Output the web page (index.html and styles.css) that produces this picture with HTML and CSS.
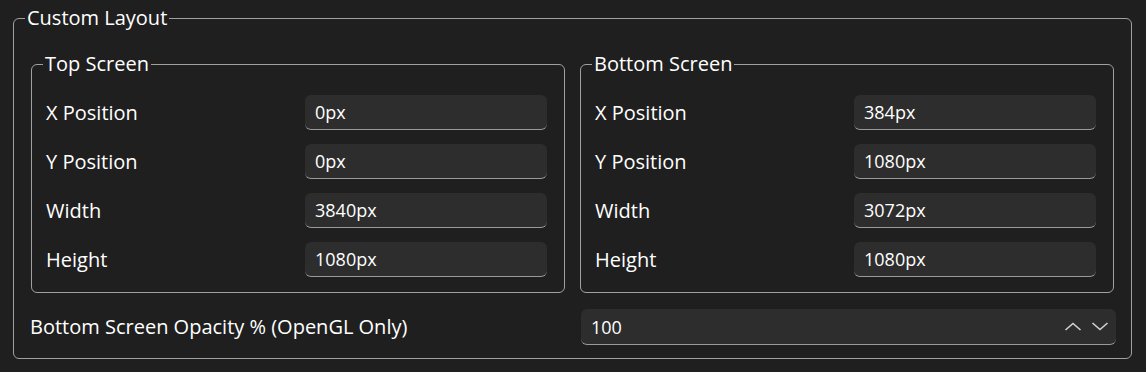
FILE: index.html
```html
<!DOCTYPE html>
<html lang="en">
<head>
<meta charset="UTF-8">
<title>Custom Layout</title>
<link rel="stylesheet" href="styles.css">
</head>
<body>

<fieldset class="group outer">
  <legend>Custom Layout</legend>

  <div class="screens">
    <fieldset class="group">
      <legend>Top Screen</legend>
      <div class="form">
        <label>X Position</label>
        <input class="field" type="text" value="0px">
        <label>Y Position</label>
        <input class="field" type="text" value="0px">
        <label>Width</label>
        <input class="field" type="text" value="3840px">
        <label>Height</label>
        <input class="field" type="text" value="1080px">
      </div>
    </fieldset>

    <fieldset class="group">
      <legend>Bottom Screen</legend>
      <div class="form">
        <label>X Position</label>
        <input class="field" type="text" value="384px">
        <label>Y Position</label>
        <input class="field" type="text" value="1080px">
        <label>Width</label>
        <input class="field" type="text" value="3072px">
        <label>Height</label>
        <input class="field" type="text" value="1080px">
      </div>
    </fieldset>
  </div>

  <!-- opacity -->
  <div class="opacity-row">
    <label>Bottom Screen Opacity % (OpenGL Only)</label>
    <div class="spin">
      <input type="text" value="100">
      <button class="spin-btn" title="Up">
        <svg width="18" height="9" viewBox="0 0 18 9"><path d="M1.5 8 L9 1.5 L16.5 8" fill="none" stroke="#d0d0d0" stroke-width="1.6"/></svg>
      </button>
      <button class="spin-btn" title="Down">
        <svg width="18" height="9" viewBox="0 0 18 9"><path d="M1.5 1 L9 7.5 L16.5 1" fill="none" stroke="#d0d0d0" stroke-width="1.6"/></svg>
      </button>
    </div>
  </div>
</fieldset>

</body>
</html>
```

FILE: styles.css
```css
body {
  margin: 0;
  padding: 6px 14px 0 13px;
  background: #1f1f1f;
  color: #fff;
  font-family: 'Open Sans', 'Noto Sans', sans-serif;
  font-size: 20px;
}

.group {
  margin: 0;
  border: 1px solid #a0a0a0;
  border-radius: 6px;
  padding: 0 17px 15px 14px;
  min-width: 0;
}

.group legend {
  padding: 0 2px;
  margin-left: -3px;
  line-height: 24px;
}

.outer {
  padding: 0 17px 13px 17px;
}

.outer > legend {
  margin-left: -6px;
}

.screens {
  display: grid;
  grid-template-columns: 1fr 1fr;
  gap: 15px;
  margin-top: 22px;
}

.form {
  display: grid;
  grid-template-columns: 1fr 242px;
  row-gap: 14px;
  align-items: center;
  margin-top: 19px;
}

.form label {
  line-height: 24px;
}

.field,
.spin {
  height: 35px;
  box-sizing: border-box;
  background: #2d2d2d;
  border: none;
  border-bottom: 1px solid #9a9a9a;
  border-radius: 6px;
}

.field {
  width: 100%;
  padding: 0 10px;
  color: #fff;
  font: inherit;
  font-size: 18px;
  outline: none;
}

.opacity-row {
  display: grid;
  grid-template-columns: 1fr 535px;
  gap: 15px;
  align-items: center;
  margin-top: 16px;
  margin-right: -2px;
  margin-left: -1px;
}

.opacity-row label {
  line-height: 24px;
}

.spin {
  display: flex;
  align-items: center;
  height: 36px;
}

.spin input {
  flex: 1;
  min-width: 0;
  background: none;
  border: none;
  color: #fff;
  font: inherit;
  font-size: 18px;
  padding: 0 10px;
  outline: none;
}

.spin-btn {
  background: none;
  border: none;
  padding: 0;
  width: 27px;
  height: 28px;
  display: flex;
  align-items: center;
  justify-content: center;
}

.spin-btn:last-child {
  margin-right: 3px;
}
```
